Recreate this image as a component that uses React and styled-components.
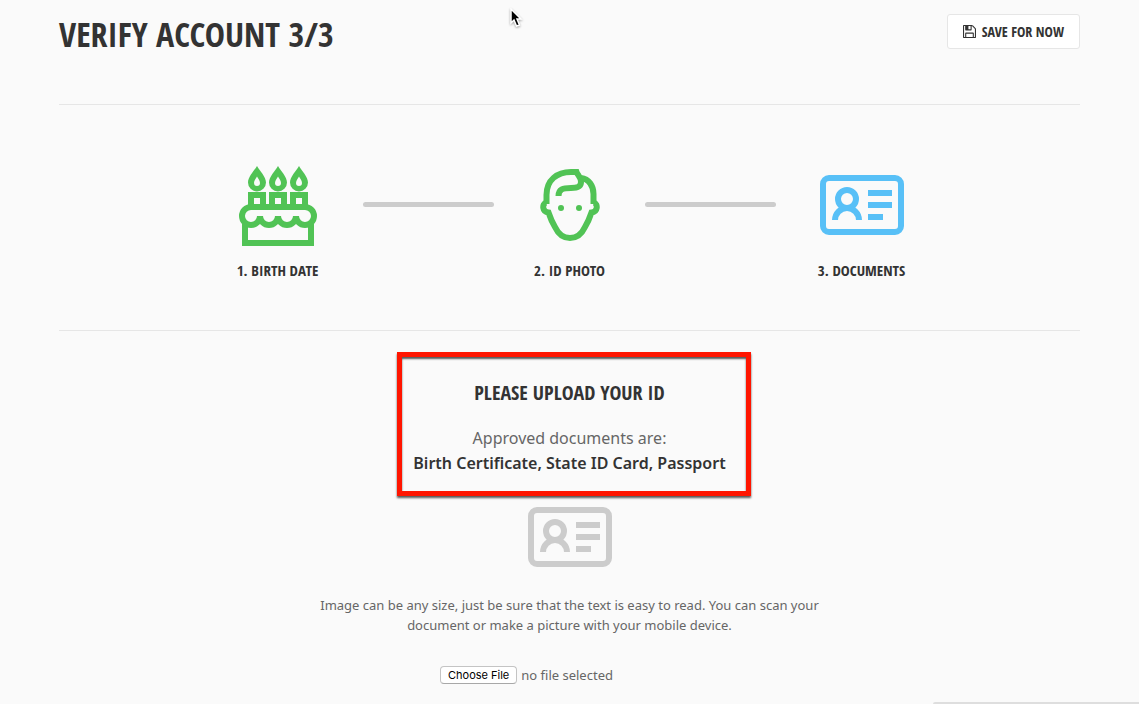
import React, {Fragment, useRef, useState} from 'react';
import styled, {createGlobalStyle} from 'styled-components';

const GlobalStyle = createGlobalStyle`
  *, *::before, *::after {
    box-sizing: border-box;
  }

  body {
    margin: 0;
    background: #fafafa;
    color: #666;
    font-family: "Noto Sans", "Open Sans", sans-serif;
    font-size: 13px;
    line-height: 20px;
  }

  h1, h2, p, ol {
    margin: 0;
    padding: 0;
  }
`;

const displayFont = `"Open Sans Condensed", "Roboto Condensed", sans-serif`;

const Page = styled.div`
  padding: 0 59px;
`;

const Header = styled.header`
  display: flex;
  align-items: flex-start;
  justify-content: space-between;
  min-height: 105px;
  padding-top: 14px;
  border-bottom: 1px solid #e6e6e6;
`;

const Title = styled.h1`
  color: #333;
  font-family: ${displayFont};
  font-size: 34px;
  font-weight: 700;
  line-height: 40px;
  text-transform: uppercase;
`;

const SaveButton = styled.button`
  display: flex;
  align-items: center;
  gap: 6px;
  height: 35px;
  padding: 0 15px;
  border: 1px solid #e6e6e6;
  border-radius: 3px;
  background: #fff;
  color: #333;
  font-family: ${displayFont};
  font-size: 14px;
  font-weight: 700;
  line-height: 20px;
  text-transform: uppercase;
  cursor: pointer;
`;

const StepsBar = styled.nav`
  border-bottom: 1px solid #e6e6e6;
`;

const Steps = styled.ol`
  display: grid;
  grid-template-columns: 171fr 131fr 151fr 131fr 171fr;
  max-width: 755px;
  margin: 0 auto;
  padding: 59px 0 50px;
  list-style: none;
`;

const Step = styled.li`
  display: flex;
  flex-direction: column;
  align-items: center;
  gap: 14px;
  color: ${(props) => props.$color};
`;

const StepIcon = styled.div`
  display: flex;
  align-items: center;
  height: 82px;
`;

const StepLabel = styled.span`
  color: #333;
  font-family: ${displayFont};
  font-size: 15px;
  font-weight: 700;
  line-height: 20px;
  text-transform: uppercase;
`;

const Connector = styled.li`
  height: 5px;
  margin-top: 38px;
  border-radius: 3px;
  background: #ccc;
`;

const Upload = styled.main`
  display: flex;
  flex-direction: column;
  align-items: center;
  padding: 48px 0 19px;
  text-align: center;
`;

const Prompt = styled.section`
  position: relative;
  width: 346px;
  max-width: 100%;
`;

const PromptTitle = styled.h2`
  margin-bottom: 19px;
  color: #333;
  font-family: ${displayFont};
  font-size: 20px;
  font-weight: 700;
  line-height: 28px;
  text-transform: uppercase;
`;

const Lead = styled.p`
  font-size: 16px;
  line-height: 25px;

  strong {
    display: block;
    color: #333;
    font-weight: 600;
  }
`;

// red marker frame drawn over the prompt
const Marker = styled.div`
  position: absolute;
  inset: -27px -8px -20px 0;
  border: 5px solid #ff1500;
  box-shadow: 0 2px 2px rgba(0, 0, 0, 0.65), inset 0 2px 2px rgba(0, 0, 0, 0.65);
  pointer-events: none;
`;

const Preview = styled.div`
  display: flex;
  margin: 31px 0 28px;
  color: #ccc;
`;

const Hint = styled.p`
  max-width: 510px;
`;

const FileRow = styled.div`
  display: flex;
  align-items: center;
  gap: 4px;
  width: 259px;
  margin-top: 30px;
`;

const FileInput = styled.input`
  position: absolute;
  width: 1px;
  height: 1px;
  overflow: hidden;
  clip-path: inset(50%);
`;

const FileButton = styled.button`
  height: 18px;
  padding: 0 7px;
  border: 1px solid #c4c4c4;
  border-bottom-color: #a8a8a8;
  border-radius: 4px;
  background: #fff;
  color: #000;
  font-family: Inter, "Liberation Sans", sans-serif;
  font-size: 11px;
  line-height: 16px;
`;

const StatusBar = styled.div`
  position: fixed;
  right: 0;
  bottom: 0;
  width: 206px;
  height: 2px;
  border-top-left-radius: 2px;
  background: #dedede;
`;

const Pointer = styled.svg`
  position: fixed;
  top: 8px;
  left: 509px;
  filter: drop-shadow(0 1px 1px rgba(0, 0, 0, 0.35));
  pointer-events: none;
`;

const SaveIcon = () => (
  <svg width="13" height="13" viewBox="0 -128 1536 1536" fill="currentColor" aria-hidden="true">
    <path d="M384 1280h768v-384h-768v384zM1280 1280h128v-896q0-14-10-38.500t-20-34.500l-281-281q-10-10-34-20t-39-10v416q0 40-28 68t-68 28h-576q-40 0-68-28t-28-68v-416h-128v1280h128v-416q0-40 28-68t68-28h832q40 0 68 28t28 68v416zM896 352v-320q0-13-9.500-22.500t-22.500-9.500h-192q-13 0-22.500 9.500t-9.500 22.500v320q0 13 9.500 22.500t22.500 9.500h192q13 0 22.500-9.500t9.500-22.500zM1536 384v928q0 40-28 68t-68 28h-1344q-40 0-68-28t-28-68v-1344q0-40 28-68t68-28h928q40 0 88 20t76 48l280 280q28 28 48 76t20 88z" />
  </svg>
);

const CakeIcon = () => (
  <svg width="78" height="82" viewBox="0 -2 78 82" fill="none" stroke="currentColor" strokeWidth="6" aria-hidden="true">
    {[0, 21, 42].map((x) => (
      <g key={x} transform={`translate(${x} 0)`}>
        <path
          d="M18 0C21 5 27 11 27 16.500a9 9 0 0 1-18 0C9 11 15 5 18 0ZM18 10.500c-1 2-3 4-3 6.500a3 3 0 0 0 6 0c0-2.500-2-4.500-3-6.500Z"
          fill="currentColor"
          fillRule="evenodd"
          stroke="none"
        />
        <path d="M12 41V29H24V41" />
      </g>
    ))}
    <path d="M12 41H66a9 9 0 0 1 9 9a9 9 0 0 1-18 0a9 9 0 0 1-18 0a9 9 0 0 1-18 0a9 9 0 0 1-18 0a9 9 0 0 1 9-9Z" />
    <path d="M6 57V77H72V57" />
  </svg>
);

const FaceIcon = () => (
  <svg width="60" height="73" viewBox="0 0 60 73" fill="none" stroke="currentColor" strokeWidth="6" aria-hidden="true">
    <path d="M6.500 35V26C6.500 11 17 3 31 3H36.500C37.500 6 41 8 41 13C41 18 37 19 31 19C23 19 18.500 20 18.500 27" />
    <path d="M41 9C49 10 53.500 17 53.500 25V35" />
    <path d="M6 33.500C2 35 2 43 8.500 43.500C10 48 12 53 15 58C18.500 65.500 24 69 30 69C36 69 41.500 65.500 45 58C48 53 50 48 51.500 43.500C58 43 58 35 54 33.500" />
    <circle cx="21" cy="39" r="3" fill="currentColor" stroke="none" />
    <circle cx="39" cy="39" r="3" fill="currentColor" stroke="none" />
  </svg>
);

const CardIcon = () => (
  <svg width="84" height="60" viewBox="0 0 84 60" fill="none" stroke="currentColor" strokeWidth="6" aria-hidden="true">
    <rect x="3" y="3" width="78" height="54" rx="6" />
    <circle cx="27" cy="24" r="9" />
    <path d="M15 45a12 12 0 0 1 24 0M48 18h24M48 30h24M48 42h15" />
  </svg>
);

const steps = [
  {label: '1. Birth Date', color: '#51c355', Icon: CakeIcon},
  {label: '2. ID Photo', color: '#51c355', Icon: FaceIcon},
  {label: '3. Documents', color: '#58c0f7', Icon: CardIcon},
];

const FilePicker = () => {
  const input = useRef(null);
  const [name, setName] = useState('');

  return (
    <FileRow>
      <FileInput
        ref={input}
        id="document"
        type="file"
        tabIndex={-1}
        onChange={(e) => setName(e.target.files.length ? e.target.files[0].name : '')}
      />
      <FileButton type="button" onClick={() => input.current.click()}>Choose File</FileButton>
      <label htmlFor="document">{name || 'no file selected'}</label>
    </FileRow>
  );
};

const App = () => (
  <Fragment>
    <GlobalStyle />
    <Page>
      <Header>
        <Title>Verify Account 3/3</Title>
        <SaveButton type="button"><SaveIcon />Save for now</SaveButton>
      </Header>
      <StepsBar>
        <Steps>
          {steps.map(({label, color, Icon}, i) => (
            <Fragment key={label}>
              {i > 0 && <Connector aria-hidden="true" />}
              <Step $color={color}>
                <StepIcon><Icon /></StepIcon>
                <StepLabel>{label}</StepLabel>
              </Step>
            </Fragment>
          ))}
        </Steps>
      </StepsBar>
      <Upload>
        <Prompt>
          <PromptTitle>Please upload your ID</PromptTitle>
          <Lead>
            Approved documents are:
            <strong>Birth Certificate, State ID Card, Passport</strong>
          </Lead>
          <Marker />
        </Prompt>
        <Preview><CardIcon /></Preview>
        <Hint>
          Image can be any size, just be sure that the text is easy to read. You can scan your
          document or make a picture with your mobile device.
        </Hint>
        <FilePicker />
      </Upload>
    </Page>
    <StatusBar />
    <Pointer width="14" height="20" viewBox="0 0 14 20" aria-hidden="true">
      <path d="M2 1V15L5 12L7.500 18L10.500 17L8 11H12Z" fill="#000" stroke="#fff" strokeWidth="1.500" />
    </Pointer>
  </Fragment>
);

export default App;
